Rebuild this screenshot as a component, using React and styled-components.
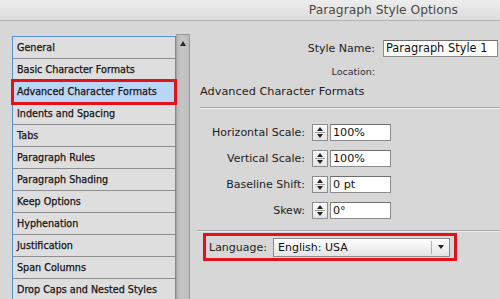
import React from "react";
import styled, { createGlobalStyle } from "styled-components";

const GlobalStyle = createGlobalStyle`
  html, body {
    margin: 0;
    padding: 0;
    background: #d7d7d7;
  }
  body {
    font-family: "DejaVu Sans", "Liberation Sans", sans-serif;
    color: #1c1c1c;
  }
`;

const Window = styled.div`
  width: 500px;
  height: 299px;
  overflow: hidden;
  display: flex;
  flex-direction: column;
  background: #d7d7d7;
`;

const TitleBar = styled.div`
  height: 20px;
  flex: none;
  display: flex;
  align-items: center;
  justify-content: flex-end;
  padding-right: 42px;
  background: linear-gradient(#ededed, #dddddd);
  border-bottom: 1px solid #b4b4b4;
  font-size: 12.3px;
  color: #4a4a4a;
`;

const Body = styled.div`
  flex: 1;
  display: flex;
  padding-top: 15px;
  min-height: 0;
`;

const Sidebar = styled.div`
  margin-left: 12px;
  display: flex;
  align-items: flex-start;
  flex: none;
`;

const List = styled.ul`
  list-style: none;
  margin: 0;
  padding: 0;
  width: 162px;
  border: 1px solid #5b8fd3;
  border-bottom: none;
  background: #dedede;
`;

const Row = styled.li`
  height: 21px;
  line-height: 22px;
  padding-left: 4px;
  font-size: 9.6px;
  -webkit-text-stroke: 0.25px #141414;
  color: #141414;
  white-space: nowrap;
  border-bottom: 1px solid #8e8e8e;
  background: ${(p) => (p.$selected ? "#b9d6f7" : "#dedede")};
  outline: ${(p) => (p.$selected ? "3px solid #e4111a" : "none")};
  outline-offset: ${(p) => (p.$selected ? "-1px" : "0")};
  position: relative;
  z-index: ${(p) => (p.$selected ? 1 : 0)};
`;

const Scrollbar = styled.div`
  width: 14px;
  height: 300px;
  margin-top: -2px;
  background: linear-gradient(90deg, #b8b8b8, #c6c6c6 40%, #bdbdbd);
  border-top: 1px solid #9a9a9a;
  border-left: 1px solid #a4a4a4;
  border-right: 1px solid #9a9a9a;
  display: flex;
  justify-content: center;
  padding-top: 6px;
  box-sizing: border-box;
`;

const UpArrow = styled.div`
  width: 0;
  height: 0;
  border-left: 3.5px solid transparent;
  border-right: 3.5px solid transparent;
  border-bottom: 5px solid #2a2a2a;
`;

const Main = styled.div`
  flex: 1;
  display: flex;
  flex-direction: column;
  padding-top: 4px;
  min-width: 0;
`;

const FormRow = styled.div`
  display: flex;
  align-items: center;
  height: ${(p) => p.$h || 17}px;
  margin-top: ${(p) => p.$mt || 0}px;
`;

const Label = styled.div`
  width: ${(p) => p.$w}px;
  text-align: ${(p) => p.$align || "right"};
  font-size: ${(p) => p.$size || 11}px;
  color: ${(p) => p.$color || "#1e1e1e"};
  white-space: nowrap;
  flex: none;
`;

const TextBox = styled.div`
  box-sizing: border-box;
  height: 17px;
  width: ${(p) => p.$w}px;
  margin-left: ${(p) => p.$ml || 0}px;
  flex: none;
  background: #ffffff;
  border: 1px solid #8c8c8c;
  border-top-color: #6f6f6f;
  padding-left: 2px;
  font-size: ${(p) => p.$size || 11}px;
  line-height: 15px;
  white-space: nowrap;
  overflow: hidden;
  color: #111;
`;

const Heading = styled.div`
  margin-left: 10px;
  margin-top: 5px;
  font-size: 11.3px;
  color: #1e1e1e;
  height: 18px;
  line-height: 18px;
`;

const Rule = styled.div`
  height: 0;
  flex: none;
  border-top: 1px solid #a9a9a9;
  border-bottom: 1px solid #ececec;
  margin-left: ${(p) => p.$ml}px;
  margin-top: ${(p) => p.$mt}px;
`;

const Spinner = styled.div`
  box-sizing: border-box;
  width: 16px;
  height: 17px;
  margin-left: 7px;
  flex: none;
  border: 1px solid #8c8c8c;
  background: linear-gradient(#fbfbfb, #e4e4e4);
  display: flex;
  flex-direction: column;
  align-items: center;
  justify-content: space-evenly;
  position: relative;
  &::after {
    content: "";
    position: absolute;
    left: 2px;
    right: 2px;
    top: 7px;
    border-top: 1px solid #9a9a9a;
  }
`;

const Tri = styled.div`
  width: 0;
  height: 0;
  border-left: 3px solid transparent;
  border-right: 3px solid transparent;
  ${(p) =>
    p.$down
      ? "border-top: 4px solid #222;"
      : "border-bottom: 4px solid #222;"}
`;

const LanguageBox = styled.div`
  box-sizing: border-box;
  margin-left: 13px;
  margin-top: 1px;
  width: 254px;
  height: 28px;
  flex: none;
  border: 3px solid #e4111a;
  display: flex;
  align-items: center;
  padding-left: 3px;
`;

const Select = styled.div`
  box-sizing: border-box;
  margin-left: 6px;
  width: 177px;
  height: 19px;
  border: 1px solid #8a8a8a;
  background: linear-gradient(#ffffff, #f2f2f2 50%, #e3e3e3);
  display: flex;
  align-items: center;
  font-size: 11px;
  color: #111;
  padding-left: 4px;
`;

const SelectText = styled.span`
  flex: 1;
  white-space: nowrap;
`;

const SelectArrow = styled.div`
  width: 17px;
  height: 13px;
  border-left: 1px solid #b0b0b0;
  display: flex;
  align-items: center;
  justify-content: center;
`;

const items = [
  "General",
  "Basic Character Formats",
  "Advanced Character Formats",
  "Indents and Spacing",
  "Tabs",
  "Paragraph Rules",
  "Paragraph Shading",
  "Keep Options",
  "Hyphenation",
  "Justification",
  "Span Columns",
  "Drop Caps and Nested Styles",
];

const fields = [
  ["Horizontal Scale:", "100%"],
  ["Vertical Scale:", "100%"],
  ["Baseline Shift:", "0 pt"],
  ["Skew:", "0°"],
];

export default function App() {
  return (
    <Window>
      <GlobalStyle />
      <TitleBar>Paragraph Style Options</TitleBar>
      <Body>
        <Sidebar>
          <List>
            {items.map((it) => (
              <Row key={it} $selected={it === "Advanced Character Formats"}>
                {it}
              </Row>
            ))}
          </List>
          <Scrollbar>
            <UpArrow />
          </Scrollbar>
        </Sidebar>
        <Main>
          <FormRow>
            <Label $w={185}>Style Name:</Label>
            <TextBox $w={115} $ml={8} $size={11.4}>
              Paragraph Style 1
            </TextBox>
          </FormRow>
          <FormRow $h={14} $mt={7}>
            <Label $w={185} $size={9.5} $color="#26303c">
              Location:
            </Label>
          </FormRow>
          <Heading>Advanced Character Formats</Heading>
          <Rule $ml={10} $mt={6} />
          {fields.map(([l, v], i) => (
            <FormRow key={l} $mt={i === 0 ? 15 : 9}>
              <Label $w={115}>{l}</Label>
              <Spinner>
                <Tri />
                <Tri $down />
              </Spinner>
              <TextBox $w={61} $ml={2} $size={11.2}>
                {v}
              </TextBox>
            </FormRow>
          ))}
          <Rule $ml={7} $mt={11} />
          <LanguageBox>
            <Label $w={58} $align="left">
              Language:
            </Label>
            <Select>
              <SelectText>English: USA</SelectText>
              <SelectArrow>
                <Tri $down />
              </SelectArrow>
            </Select>
          </LanguageBox>
        </Main>
      </Body>
    </Window>
  );
}
